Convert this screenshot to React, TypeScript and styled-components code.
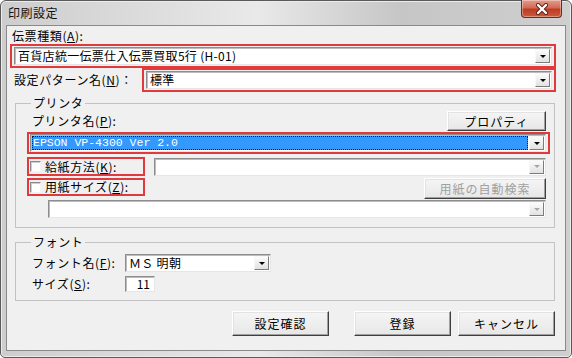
import React from "react";
import styled, { createGlobalStyle, css } from "styled-components";

const GlobalStyle = createGlobalStyle`
  html, body { margin: 0; padding: 0; background: #ffffff; }
  body {
    font-family: "Noto Sans CJK JP", "Noto Sans", sans-serif;
    font-size: 12px;
    color: #000;
  }
  * { box-sizing: border-box; }
`;

const Window = styled.div`
  width: 572px;
  height: 358px;
  display: flex;
  flex-direction: column;
  border: 1px solid #5a5a5a;
  border-radius: 6px 6px 5px 5px;
  padding: 0 5px 6px 5px;
  background: linear-gradient(90deg, #cdcdcd 0%, #dcdcdc 25%, #e9e9e9 45%, #c6c6c6 70%, #cfcfcf 100%);
  box-shadow: inset 0 0 0 1px #ececec;
`;

const TitleBar = styled.div`
  height: 24px;
  display: flex;
  align-items: flex-start;
  justify-content: space-between;
`;

const Title = styled.span`
  margin-top: 5px;
  margin-left: 2px;
  font-size: 12px;
  line-height: 14px;
  letter-spacing: 0.5px;
  color: #111;
`;

const CloseButton = styled.div`
  width: 41px;
  height: 18px;
  margin-top: -1px;
  margin-right: 4px;
  border: 1px solid #6e2a20;
  border-top: none;
  border-radius: 0 0 4px 4px;
  background: linear-gradient(#e39c8d 0%, #d26b56 45%, #bd3b24 55%, #cc5a3c 100%);
  box-shadow: inset 0 0 0 1px rgba(255, 255, 255, 0.35);
  display: flex;
  align-items: center;
  justify-content: center;
`;

const Client = styled.div`
  flex: 1;
  border: 1px solid #8a8a8a;
  background: #f0f0f0;
  padding: 0 9px 0 3px;
  display: flex;
  flex-direction: column;
`;

const Label = styled.span<{ $indent?: number }>`
  line-height: 16px;
  white-space: nowrap;
  letter-spacing: 0.6px;
  margin-left: ${(p) => p.$indent ?? 0}px;
`;

const LabelRow = styled.div`
  height: 16px;
  margin-top: 2px;
  display: flex;
  align-items: center;
  padding-left: 2px;
`;

const RedBox = styled.div<{ $width?: number; $pad?: string; $mt?: number; $h?: number }>`
  border: 2px solid #e2393c;
  display: flex;
  align-items: center;
  flex: none;
  padding: ${(p) => p.$pad ?? "0"};
  margin-top: ${(p) => p.$mt ?? 0}px;
  ${(p) => p.$width && css`width: ${p.$width}px;`}
  ${(p) => p.$h && css`height: ${p.$h}px;`}
`;

const FieldRow = styled.div`
  height: 24px;
  display: flex;
  align-items: center;
  justify-content: space-between;
`;

const Combo = styled.div<{ $width?: number; $ml?: number; $mr?: number }>`
  height: 18px;
  display: flex;
  align-items: stretch;
  background: #fff;
  border: 1px solid;
  border-color: #8d8d8d #e6e6e6 #e6e6e6 #8d8d8d;
  box-shadow: inset 1px 1px 0 #bcbcbc;
  margin-left: ${(p) => p.$ml ?? 0}px;
  margin-right: ${(p) => p.$mr ?? 0}px;
  ${(p) => (p.$width ? css`width: ${p.$width}px; flex: none;` : css`flex: 1;`)}
`;

const ComboText = styled.div<{ $selected?: boolean; $mono?: boolean }>`
  flex: 1;
  display: flex;
  align-items: center;
  padding-left: 3px;
  line-height: 14px;
  white-space: nowrap;
  overflow: hidden;
  letter-spacing: 0.3px;
  ${(p) =>
    p.$mono &&
    css`
      font-family: "Liberation Mono", "DejaVu Sans Mono", monospace;
      font-size: 11.5px;
      letter-spacing: 0;
    `}
  ${(p) =>
    p.$selected &&
    css`
      margin: 1px;
      padding-left: 1px;
      background: #3399ff;
      color: #fff;
      outline: 1px dotted #1a1a1a;
      outline-offset: -1px;
    `}
`;

const ArrowButton = styled.div<{ $disabled?: boolean }>`
  width: 15px;
  margin: 1px 1px 1px 0;
  background: linear-gradient(#fbfbfb, #e2e2e2);
  border: 1px solid;
  border-color: #f8f8f8 #7c7c7c #7c7c7c #f8f8f8;
  display: flex;
  align-items: center;
  justify-content: center;
  &::after {
    content: "";
    border-left: 3px solid transparent;
    border-right: 3px solid transparent;
    border-top: 3px solid ${(p) => (p.$disabled ? "#a6a6a6" : "#000")};
  }
`;

const Group = styled.fieldset<{ $mt: number; $pb: number }>`
  margin: ${(p) => p.$mt}px 1px 0 5px;
  padding: 1px 4px ${(p) => p.$pb}px 11px;
  border: 1px solid #c3c3c3;
  min-width: 0;
`;

const Legend = styled.legend`
  margin-left: 4px;
  padding: 0 2px;
  line-height: 14px;
  letter-spacing: 0.6px;
`;

const GroupRow = styled.div<{ $h: number; $mt?: number; $top?: boolean }>`
  height: ${(p) => p.$h}px;
  margin-top: ${(p) => p.$mt ?? 0}px;
  display: flex;
  align-items: ${(p) => (p.$top ? "flex-start" : "center")};
  justify-content: space-between;
`;

const PushButton = styled.button<{ $width: number; $height: number; $mr?: number; $disabled?: boolean }>`
  width: ${(p) => p.$width}px;
  height: ${(p) => p.$height}px;
  margin: 0 ${(p) => p.$mr ?? 0}px 0 0;
  padding: 0;
  flex: none;
  font-family: inherit;
  font-size: 12px;
  color: ${(p) => (p.$disabled ? "#a0a0a0" : "#000")};
  background: linear-gradient(#f5f5f5, #e7e7e7);
  border: 1px solid;
  border-color: #ffffff #3f3f3f #3f3f3f #ffffff;
  box-shadow: inset -1px -1px 0 #a0a0a0, inset 1px 1px 0 #e3e3e3;
  letter-spacing: 1px;
`;

const CheckBox = styled.span`
  width: 11px;
  height: 11px;
  flex: none;
  background: #fff;
  border: 1px solid;
  border-color: #8a8a8a #f2f2f2 #f2f2f2 #8a8a8a;
  box-shadow: inset 1px 1px 0 #cfcfcf;
  margin: 0 4px 0 1px;
`;

const FontGrid = styled.div`
  display: grid;
  grid-template-columns: 93px auto;
  row-gap: 4px;
  padding: 4px 0 0 5px;
  align-items: center;
  justify-items: start;
`;

const NumberBox = styled.div`
  width: 30px;
  height: 16px;
  background: #fff;
  border: 1px solid;
  border-color: #8d8d8d #e6e6e6 #e6e6e6 #8d8d8d;
  box-shadow: inset 1px 1px 0 #bcbcbc;
  text-align: right;
  padding-right: 4px;
  line-height: 14px;
`;

const ButtonRow = styled.div`
  margin-top: 10px;
  margin-right: 1px;
  display: flex;
  justify-content: flex-end;
  gap: 7px;
`;

export default function App() {
  return (
    <>
      <GlobalStyle />
      <Window>
        <TitleBar>
          <Title>印刷設定</Title>
          <CloseButton>
            <svg width="14" height="12" viewBox="0 0 14 12">
              <path d="M3 2 L11 10 M11 2 L3 10" stroke="#5a1a10" strokeWidth="4" strokeLinecap="round" />
              <path d="M3 2 L11 10 M11 2 L3 10" stroke="#fff" strokeWidth="2.4" strokeLinecap="round" />
            </svg>
          </CloseButton>
        </TitleBar>
        <Client>
          <LabelRow>
            <Label>伝票種類(<u>A</u>):</Label>
          </LabelRow>
          <RedBox $pad="1px 2px">
            <Combo>
              <ComboText>百貨店統一伝票仕入伝票買取5行 (H-01)</ComboText>
              <ArrowButton />
            </Combo>
          </RedBox>
          <FieldRow>
            <Label $indent={4}>設定パターン名(<u>N</u>)：</Label>
            <RedBox $width={414} $pad="1px 2px">
              <Combo>
                <ComboText>標準</ComboText>
                <ArrowButton />
              </Combo>
            </RedBox>
          </FieldRow>

          <Group $mt={4} $pb={9}>
            <Legend>プリンタ</Legend>
            <GroupRow $h={20}>
              <Label $indent={5}>プリンタ名(<u>P</u>):</Label>
              <PushButton $width={99} $height={20} $mr={4}>プロパティ</PushButton>
            </GroupRow>
            <RedBox $mt={1} $pad="0 2px 0 1px">
              <Combo>
                <ComboText $selected $mono>EPSON VP-4300 Ver 2.0</ComboText>
                <ArrowButton />
              </Combo>
            </RedBox>
            <GroupRow $h={19} $mt={3}>
              <RedBox $width={118} $h={19}>
                <CheckBox />
                <Label>給紙方法(<u>K</u>):</Label>
              </RedBox>
              <Combo $width={392} $mr={4}>
                <ComboText />
                <ArrowButton $disabled />
              </Combo>
            </GroupRow>
            <GroupRow $h={21} $mt={2} $top>
              <RedBox $width={118} $h={18}>
                <CheckBox />
                <Label>用紙サイズ(<u>Z</u>):</Label>
              </RedBox>
              <PushButton $width={122} $height={21} $mr={4} $disabled>用紙の自動検索</PushButton>
            </GroupRow>
            <GroupRow $h={18} $mt={1}>
              <Combo $ml={21} $mr={4}>
                <ComboText />
                <ArrowButton $disabled />
              </Combo>
            </GroupRow>
          </Group>

          <Group $mt={7} $pb={8}>
            <Legend>フォント</Legend>
            <FontGrid>
              <Label>フォント名(<u>F</u>):</Label>
              <Combo $width={146}>
                <ComboText>ＭＳ 明朝</ComboText>
                <ArrowButton />
              </Combo>
              <Label>サイズ(<u>S</u>):</Label>
              <NumberBox>11</NumberBox>
            </FontGrid>
          </Group>

          <ButtonRow>
            <PushButton $width={97} $height={25} $mr={18}>設定確認</PushButton>
            <PushButton $width={97} $height={25}>登録</PushButton>
            <PushButton $width={97} $height={25}>キャンセル</PushButton>
          </ButtonRow>
        </Client>
      </Window>
    </>
  );
}
